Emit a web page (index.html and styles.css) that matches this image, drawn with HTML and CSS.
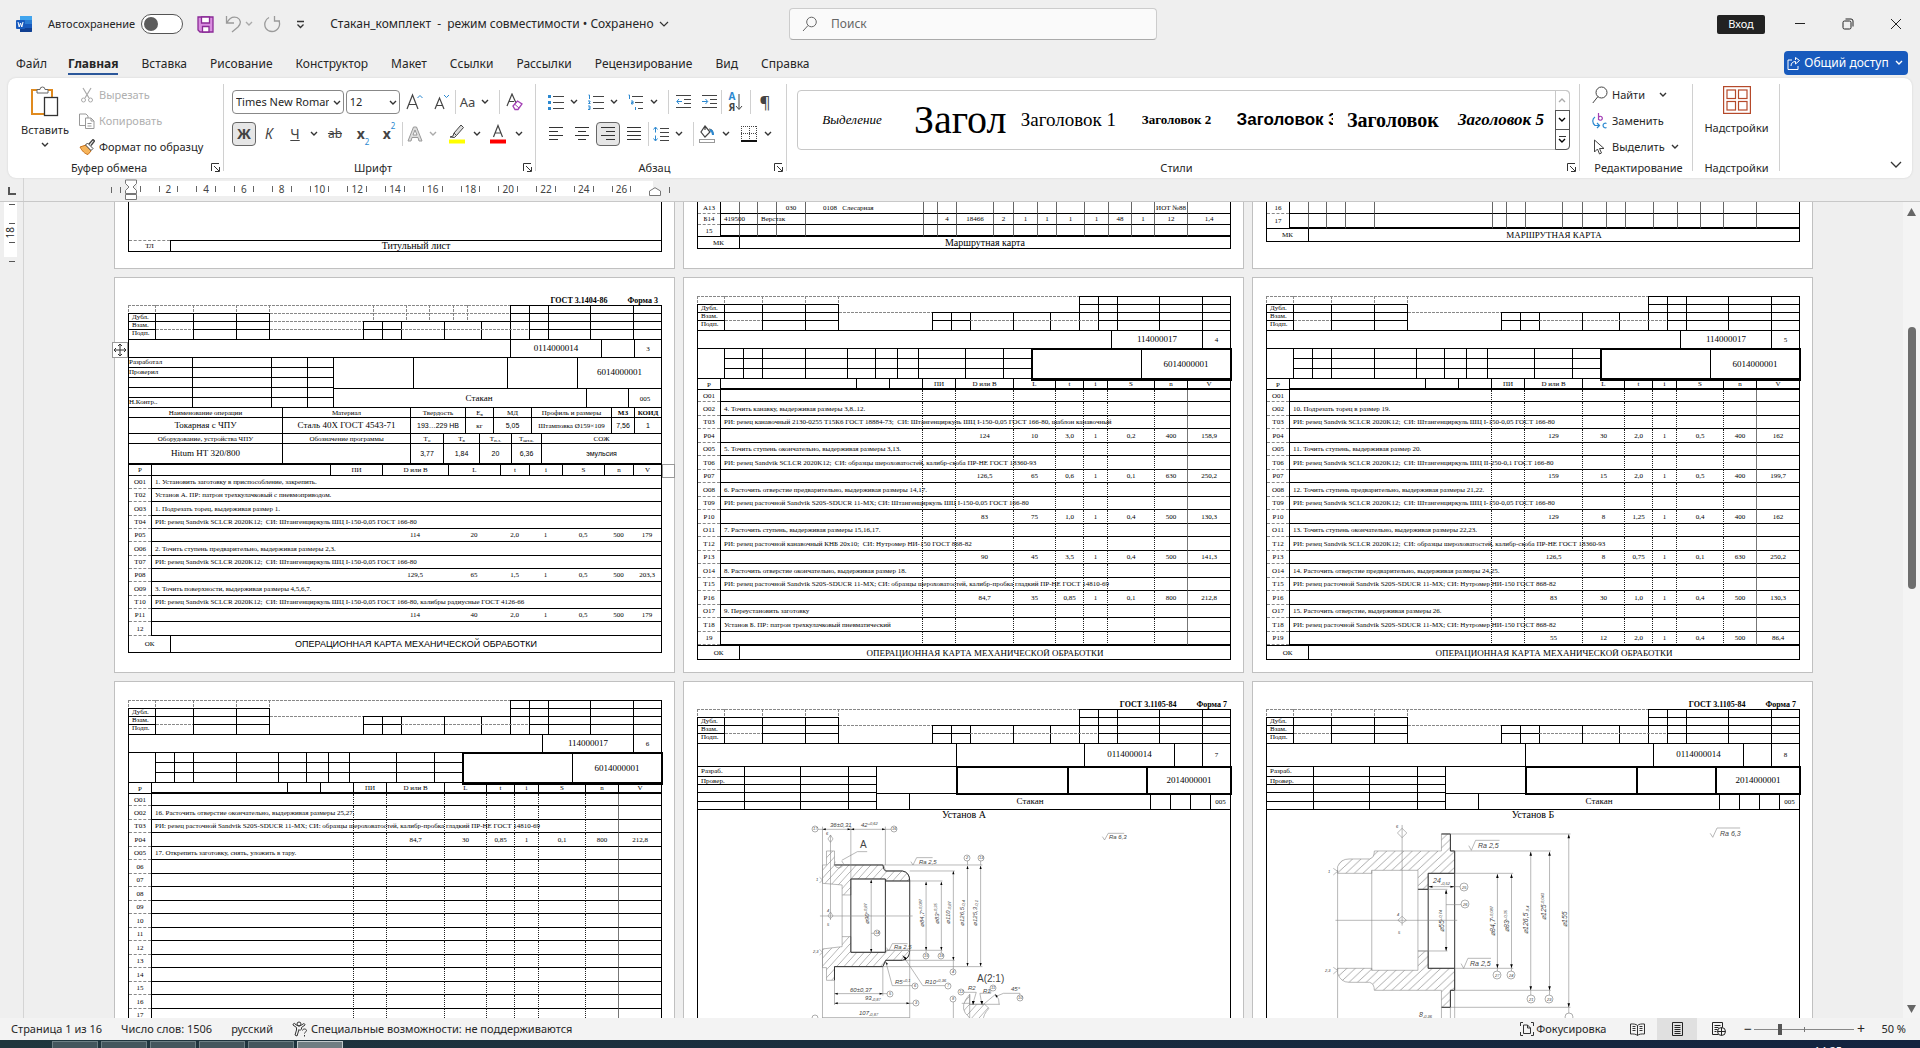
FILE: index.html
```html
<!DOCTYPE html>
<html lang="ru">
<head>
<meta charset="utf-8">
<title>Стакан_комплект</title>
<link rel="stylesheet" href="styles.css">
</head>
<body>
<svg class="defs" aria-hidden="true">
  <symbol id="caret" viewBox="0 0 8 6"><path d="M1 1l3 3 3-3" fill="none" stroke="currentColor" stroke-width="1.4"/></symbol>
  <symbol id="launch" viewBox="0 0 9 9"><path d="M.5 8V.5H8M3 3l5 5M8.500 4V8.500H4" fill="none" stroke="#333"/></symbol>
  <!-- upper stamp common to every form -->
  <symbol id="stamp" viewBox="0 0 534 35">
    <path class="ink" d="M0 8.500H142M0 16.500H142M0 24.500H28M65 24.500H142M0 34.500H534M.5 8V35M27.500 8V35M65.500 8V35M108.500 8V35M141.500 8V35M235 16.500H382M235 24.500H273M235.500 16V35M254.500 16V35M273.500 16V35M316.500 16V35M353.500 16V35M382 .5H534M382 8.500H534M382 16.500H534M401 24.500H534M382.500 0V35M401.500 0V35M420.500 0V35M462.500 0V35M505.500 0V35M533.500 0V35"/>
    <path class="dash" d="M0 .5H382M.5 0V8M27.500 0V8M65.500 0V8M108.500 0V8M141.500 0V8M28 24.500H65M142 16.500H235M273 24.500H401"/>
  </symbol>
  <symbol id="stamp-extra" viewBox="0 0 534 35">
    <path class="dash" d="M142 8.500H382M142 24.500H235M245.500 0V16M278.500 0V16M301.500 0V16M325.500 0V16M339.500 0V16"/>
  </symbol>
  <symbol id="changes" viewBox="0 0 334 30">
    <path class="ink" d="M27 9.500H334M27 19.500H334M26.500 0V30M45.500 0V30M64.500 0V30M107.500 0V30M149.500 0V30M177.500 0V30M199.500 0V30M220.500 0V30M267.500 0V30M305.500 0V30"/>
  </symbol>
  <pattern id="hatch" width="20" height="24" patternUnits="userSpaceOnUse"><path d="M-2 26.400L22 -2.400" stroke="#777" stroke-width="1.600"/></pattern>
</svg>

<header class="titlebar">
  <svg class="word" width="16" height="16" viewBox="0 0 16 16"><rect x="4" width="12" height="16" rx="1" fill="#2b7cd3"/><path d="M4 0h11a1 1 0 0 1 1 1v3H4z" fill="#41a5ee"/><path d="M4 12h12v3a1 1 0 0 1-1 1H4z" fill="#103f91"/><path d="M4 8h12v4H4z" fill="#185abd"/><rect y="4" width="9" height="9" rx="1" fill="#185abd"/><path d="M2 6l1.200 5L4.500 7l1.300 4L7 6" fill="none" stroke="#fff"/></svg>
  <label class="autosave">Автосохранение <input type="checkbox"></label>
  <button class="ib" aria-label="Сохранить"><svg width="17" height="17" viewBox="0 0 17 17"><path d="M1 1h15v15H3l-2-2z" fill="#d98ee0" stroke="#8a2a96" stroke-width="1.300"/><path d="M4.500 1h8v6h-8zM5.500 10.500h6.500V16H5.500z" fill="#fff" stroke="#8a2a96" stroke-width="1.300"/></svg></button>
  <button class="ib" aria-label="Отменить"><svg width="17" height="18" viewBox="0 0 17 18"><path d="M1.500 1v7H9M2 7.500C5 2 9 1.500 12 2.500c4 2 4.500 6 1 9.500L7 17" fill="none" stroke="#9a9a9a" stroke-width="1.300"/></svg></button>
  <svg class="cv pale"><use href="#caret"/></svg>
  <button class="ib" aria-label="Повторить"><svg width="18" height="18" viewBox="0 0 18 18"><path d="M11.500 1v5H17M16 6C18 11 14.500 16.500 9 16.500S1 12 2 7.500c.5-2 2-4 4-5" fill="none" stroke="#9a9a9a" stroke-width="1.300"/></svg></button>
  <button class="ib" aria-label="Настроить панель"><svg width="9" height="9" viewBox="0 0 9 9"><path d="M1 1.500h7M1.500 4.500l3 3 3-3" fill="none" stroke="#333" stroke-width="1.300"/></svg></button>
  <button class="doc-name">Стакан_комплект&nbsp; -&nbsp; режим совместимости • Сохранено <svg width="10" height="7" viewBox="0 0 10 7"><path d="M1 1l4 4 4-4" fill="none" stroke="#333" stroke-width="1.200"/></svg></button>
  <label class="search"><svg width="16" height="16" viewBox="0 0 16 16"><circle cx="9.500" cy="6" r="4.800" fill="none" stroke="#666"/><path d="M6 9.500L1 15" stroke="#666"/></svg><input type="text" placeholder="Поиск" aria-label="Поиск"></label>
  <div class="window-tools">
    <button class="signin">Вход</button>
    <button class="win" aria-label="Свернуть"><svg width="12" height="12" viewBox="0 0 12 12"><path d="M1 5.500h10" stroke="#222"/></svg></button>
    <button class="win" aria-label="Восстановить"><svg width="12" height="12" viewBox="0 0 12 12"><rect x="1" y="3" width="8" height="8" rx="1.500" fill="none" stroke="#222"/><path d="M3.500 1h5.500a2 2 0 0 1 2 2v5.500" fill="none" stroke="#222"/></svg></button>
    <button class="win" aria-label="Закрыть"><svg width="12" height="12" viewBox="0 0 12 12"><path d="M1 1l10 10M11 1L1 11" stroke="#222"/></svg></button>
  </div>
</header>

<nav class="tabs">
  <a href="#file">Файл</a><a href="#home" class="on">Главная</a><a href="#insert">Вставка</a><a href="#draw">Рисование</a><a href="#design">Конструктор</a><a href="#layout">Макет</a><a href="#refs">Ссылки</a><a href="#mail">Рассылки</a><a href="#review">Рецензирование</a><a href="#view">Вид</a><a href="#help">Справка</a>
  <button class="share"><svg width="13" height="13" viewBox="0 0 13 13"><path d="M5 3H1v9.500h10V9M4 9c0-3 2-4.500 4.500-4.500V7L12.500 3.500 8.500.5V3" fill="none" stroke="#fff"/></svg>Общий доступ<svg class="cv"><use href="#caret"/></svg></button>
</nav>

<section class="ribbon">
  <div class="group clip">
    <div class="body">
      <button class="big"><svg width="28" height="32" viewBox="0 0 28 32"><path d="M6 4H1v24h12M16 4h5v7" fill="none" stroke="#e08a1e" stroke-width="2"/><path d="M6 7V3.500h3a2.500 2.500 0 0 1 5 0h3V7z" fill="#fff" stroke="#666"/><rect x="13.500" y="11.500" width="13" height="18" fill="#fff" stroke="#333" stroke-width="1.300"/></svg>Вставить<svg class="cv"><use href="#caret"/></svg></button>
      <div class="stack">
        <button class="line off"><svg width="16" height="16" viewBox="0 0 16 16"><path d="M4 1l6 10M12 1L6 11" fill="none" stroke="#aaa" stroke-width="1.200"/><circle cx="4.500" cy="13" r="2" fill="none" stroke="#aaa"/><circle cx="11.500" cy="13" r="2" fill="none" stroke="#aaa"/></svg>Вырезать</button>
        <button class="line off"><svg width="16" height="16" viewBox="0 0 16 16"><path d="M6 12.500H.5V1H7l2 2v2M6.500 5H12l3 3v7.500H6.500zM12 5v3h3M8.500 10.500h4M8.500 13h4" fill="none" stroke="#999"/></svg>Копировать</button>
        <button class="line"><svg width="16" height="16" viewBox="0 0 16 16"><path d="M1 8l6-2 5 6-3 3.500C6 15 3 12 1 8z" fill="#f6b45a" stroke="#c8701a"/><path d="M6.500 6l2-2 5.500 5.500-2 2z" fill="#fff" stroke="#444"/><path d="M10 5l4-4.500 1.500 1.500L12 6.500" fill="none" stroke="#444" stroke-width="1.300"/></svg>Формат по образцу</button>
      </div>
    </div>
    <div class="foot">Буфер обмена<button aria-label="Параметры буфера"><svg><use href="#launch"/></svg></button></div>
  </div>

  <div class="group font">
    <div class="body rows">
      <div class="tools">
        <span class="combo name"><select aria-label="Шрифт"><option>Times New Roman</option></select><svg class="cv"><use href="#caret"/></svg></span>
        <span class="combo size"><select aria-label="Размер"><option>12</option></select><svg class="cv"><use href="#caret"/></svg></span>
        <button class="t w28" aria-label="Увеличить"><svg width="18" height="18" viewBox="0 0 18 18"><path d="M1 16L6.500 2 12 16M3 11.500h7" fill="none" stroke="#444" stroke-width="1.200"/><path d="M11.500 5L14 2.500 16.500 5" fill="none" stroke="#2b88d0"/></svg></button>
        <button class="t w26" aria-label="Уменьшить"><svg width="18" height="18" viewBox="0 0 18 18"><path d="M2 16L6.500 5 11 16M3.500 12.500h6" fill="none" stroke="#444" stroke-width="1.200"/><path d="M11 2l2.500 2.500L16 2" fill="none" stroke="#2b88d0"/></svg></button>
        <i class="bar"></i>
        <button class="t w24 big-aa">Aa</button><svg class="cv"><use href="#caret"/></svg>
        <i class="bar ml"></i>
        <button class="t w28" aria-label="Очистить формат"><svg width="17" height="18" viewBox="0 0 17 18"><path d="M1 13L6 1l4 9M3 8.500h5" fill="none" stroke="#444" stroke-width="1.200"/><path d="M7 13l4.500-5L16 11l-4 5.500H9z" fill="#fff" stroke="#a33fb5" stroke-width="1.300"/><path d="M8.500 11l4.500 4" stroke="#a33fb5"/></svg></button>
      </div>
      <div class="tools">
        <button class="t w24 on"><b>Ж</b></button>
        <button class="t w26"><em>К</em></button>
        <button class="t w26"><u>Ч</u></button><svg class="cv"><use href="#caret"/></svg>
        <button class="t w30"><s>ab</s></button>
        <button class="t w26 x"><b>x</b><sub>2</sub></button>
        <button class="t w26 x"><b>x</b><sup>2</sup></button>
        <i class="bar"></i>
        <button class="t w24" aria-label="Эффекты"><svg width="16" height="16" viewBox="0 0 16 16"><path d="M1 15L6.500 1h3L15 15h-3l-1-3.500H5L4 15zM6 9h4L8 4z" fill="#ddd" stroke="#999"/></svg></button><svg class="cv pale"><use href="#caret"/></svg>
        <button class="t w28 ml" aria-label="Цвет выделения"><svg width="16" height="20" viewBox="0 0 16 20"><path d="M1 13l3-1 1-3 7-8 2.500 2.500-7 8-2 2zM5 9l2.500 2.500" fill="#ddd" stroke="#444"/><path d="M0 15.500h16v4H0z" fill="#ff0"/></svg></button><svg class="cv"><use href="#caret"/></svg>
        <button class="t w30" aria-label="Цвет текста"><svg width="16" height="20" viewBox="0 0 16 20"><path d="M3.500 13L8 1.500 12.500 13M5 9h6" fill="none" stroke="#444" stroke-width="1.200"/><path d="M0 15.500h16v4H0z" fill="#f00"/></svg></button><svg class="cv"><use href="#caret"/></svg>
      </div>
    </div>
    <div class="foot">Шрифт<button aria-label="Параметры шрифта"><svg><use href="#launch"/></svg></button></div>
  </div>

  <div class="group para">
    <div class="body rows">
      <div class="tools">
        <button class="t w24" aria-label="Маркеры"><svg width="16" height="16" viewBox="0 0 16 16"><path d="M5 2.500h11M5 8.500h11M5 14.500h11" stroke="#444"/><path d="M0 1h3v3H0zM0 7h3v3H0zM0 13h3v3H0z" fill="#2b88d0"/></svg></button><svg class="cv"><use href="#caret"/></svg>
        <button class="t w24 ml" aria-label="Нумерация"><svg width="16" height="16" viewBox="0 0 16 16"><path d="M5 2.500h11M5 8.500h11M5 14.500h11" stroke="#444"/><path d="M.5 1h1v4M0 7h2v1L.5 9.500h2M0 12h2v2H.5M2 14v1.500H0" fill="none" stroke="#2b88d0"/></svg></button><svg class="cv"><use href="#caret"/></svg>
        <button class="t w24 ml" aria-label="Список"><svg width="16" height="16" viewBox="0 0 16 16"><path d="M4 2.500h11M7 8.500h8M10 14.500h5" stroke="#444"/><path d="M.5 1h1v4M3 7h2v3H3.500V8.500H5M7.500 13v3" fill="none" stroke="#2b88d0"/></svg></button><svg class="cv"><use href="#caret"/></svg>
        <i class="bar ml"></i>
        <button class="t w28" aria-label="Уменьшить отступ"><svg width="15" height="14" viewBox="0 0 15 14"><path d="M0 .5h15M8 4.500h7M8 8.500h7M0 12.500h15" stroke="#444"/><path d="M6 6.500H1M3 4L.8 6.500 3 9" fill="none" stroke="#2b88d0"/></svg></button>
        <button class="t w24" aria-label="Увеличить отступ"><svg width="15" height="14" viewBox="0 0 15 14"><path d="M0 .5h15M8 4.500h7M8 8.500h7M0 12.500h15" stroke="#444"/><path d="M0 6.500h5.500M3.500 4l2.200 2.500L3.500 9" fill="none" stroke="#2b88d0"/></svg></button>
        <i class="bar"></i>
        <button class="t w28 sort"><span><b>А</b><b>Я</b></span><svg width="8" height="18" viewBox="0 0 8 18"><path d="M4 1v15M1 13l3 3.500L7 13" fill="none" stroke="#444"/></svg></button>
        <i class="bar"></i>
        <button class="t w28 pil">¶</button>
      </div>
      <div class="tools">
        <button class="t w24" aria-label="По левому краю"><svg width="14" height="14" viewBox="0 0 14 14"><path d="M0 .5h14M0 4.500h9M0 8.500h14M0 12.500h9" stroke="#333"/></svg></button>
        <button class="t w28" aria-label="По центру"><svg width="14" height="14" viewBox="0 0 14 14"><path d="M0 .5h14M3 4.500h8M0 8.500h14M3 12.500h8" stroke="#333"/></svg></button>
        <button class="t w24 on" aria-label="По правому краю"><svg width="14" height="14" viewBox="0 0 14 14"><path d="M0 .5h14M5 4.500h9M0 8.500h14M5 12.500h9" stroke="#333"/></svg></button>
        <button class="t w28" aria-label="По ширине"><svg width="14" height="14" viewBox="0 0 14 14"><path d="M0 .5h14M0 4.500h14M0 8.500h14M0 12.500h14" stroke="#333"/></svg></button>
        <i class="bar"></i>
        <button class="t w24" aria-label="Интервал"><svg width="16" height="16" viewBox="0 0 16 16"><path d="M7 2.500h9M7 6.500h9M7 10.500h9M7 14.500h9" stroke="#444"/><path d="M2.500 1.500v5M.5 3.500l2-2.500 2 2.500M2.500 9.500v5M.5 12.500l2 2.500 2-2.500" fill="none" stroke="#2b88d0"/></svg></button><svg class="cv"><use href="#caret"/></svg>
        <i class="bar ml"></i>
        <button class="t w26" aria-label="Заливка"><svg width="16" height="18" viewBox="0 0 16 18"><path d="M6 1l5 6-5 5-4-5zM6 1V5M10 4c3 0 4 3 4 6" fill="none" stroke="#444" stroke-width="1.200"/><path d="M11 5c3 1 3 3 3 5" fill="none" stroke="#2b88d0" stroke-width="2"/><rect x=".5" y="14.500" width="15" height="3" fill="#fff" stroke="#999"/></svg></button><svg class="cv"><use href="#caret"/></svg>
        <button class="t w26 ml" aria-label="Границы"><svg width="16" height="16" viewBox="0 0 16 16"><path d="M.5 0V14M15.500 0V14M8.500 0V14M0 .5h16M0 7.500h16" stroke="#444" stroke-dasharray="1 1"/><path d="M0 15h16" stroke="#111" stroke-width="2"/></svg></button><svg class="cv"><use href="#caret"/></svg>
      </div>
    </div>
    <div class="foot">Абзац<button aria-label="Параметры абзаца"><svg><use href="#launch"/></svg></button></div>
  </div>

  <div class="group styles">
    <div class="body">
      <div class="gallery">
        <button class="s1">Выделение</button><button class="s2">Загол</button><button class="s3">Заголовок 1</button><button class="s4">Заголовок 2</button><button class="s5">Заголовок 3</button><button class="s6">Заголовок</button><button class="s7">Заголовок 5</button>
        <div class="gal-nav"><button class="dim" aria-label="Вверх"><svg class="up"><use href="#caret"/></svg></button><button aria-label="Вниз"><svg><use href="#caret"/></svg></button><button class="more" aria-label="Все стили"><svg><use href="#caret"/></svg></button></div>
      </div>
    </div>
    <div class="foot">Стили<button aria-label="Параметры стилей"><svg><use href="#launch"/></svg></button></div>
  </div>

  <div class="group edit">
    <div class="body stack">
      <button class="line"><svg width="16" height="18" viewBox="0 0 16 18"><circle cx="9.500" cy="6.500" r="5.500" fill="none" stroke="#444"/><path d="M6 10.500L.8 17" stroke="#444"/></svg>Найти<svg class="cv far"><use href="#caret"/></svg></button>
      <button class="line"><svg width="16" height="16" viewBox="0 0 16 16"><path d="M6.500 0v7M6.500 4.500a2 2 0 1 1 0 1.500" fill="none" stroke="#a33fb5" stroke-width="1.200"/><path d="M3 4C0 6 0 10 3 12.500h4M5 10l2.500 2.500L5 15M14.500 10.500a2.300 2.300 0 1 0 0 4" fill="none" stroke="#2b88d0" stroke-width="1.200"/></svg>Заменить</button>
      <button class="line"><svg width="16" height="16" viewBox="0 0 16 16"><path d="M2.500 1v12l3-3 2 5 2-1-2-4.500H12z" fill="#fff" stroke="#444"/></svg>Выделить<svg class="cv"><use href="#caret"/></svg></button>
    </div>
    <div class="foot plain-foot">Редактирование</div>
  </div>

  <div class="group addins">
    <div class="body"><button class="big"><svg width="28" height="28" viewBox="0 0 28 28" fill="none" stroke="#b5492a" stroke-width="1.200"><rect x=".6" y=".6" width="26.800" height="26.800"/><rect x="4" y="4" width="8.500" height="8.500"/><rect x="15.500" y="4" width="8.500" height="8.500"/><rect x="4" y="15.500" width="8.500" height="8.500"/><rect x="15.500" y="15.500" width="8.500" height="8.500"/></svg>Надстройки</button></div>
    <div class="foot plain-foot">Надстройки</div>
  </div>
  <button class="collapse" aria-label="Свернуть ленту"><svg width="12" height="8" viewBox="0 0 12 8"><path d="M1 1l5 5 5-5" fill="none" stroke="#333" stroke-width="1.300"/></svg></button>
</section>

<main class="work">
  <div class="ruler">
    <div class="corner"></div>
    <div class="scale-wrap">
      <div class="lead"></div>
      <svg class="indent" width="12" height="21" viewBox="0 0 12 21"><path d="M.5 1h11v3.500L8 8l3.500 3.500V14.500H.5v-3L4 8 .5 4.500zM.5 15.500h11v5H.5z" fill="#fff" stroke="#777"/></svg>
      <div class="scale"><i></i><span>2</span><span>4</span><span>6</span><span>8</span><span>10</span><span>12</span><span>14</span><span>16</span><span>18</span><span>20</span><span>22</span><span>24</span><span>26</span></div>
      <svg class="indent end" width="12" height="9" viewBox="0 0 12 9"><path d="M.5 8.500V4L6 .7 11.500 4v4.500z" fill="#fff" stroke="#777"/></svg>
      <div class="tail"></div>
    </div>
  </div>
  <div class="vruler"><div><span>18</span></div></div>
  <div class="canvas">

    <article class="sheet cut">
      <div class="frame blank"></div>
      <div class="frame foot-row title-foot"><span>ТЛ</span><strong>Титульный лист</strong></div>
    </article>

    <article class="sheet cut">
      <table class="route">
        <colgroup><col class="c22"><col class="c19"><col class="c18"><col class="c19"><col class="c29"><col class="c118"><col class="c14"><col class="c19"><col class="c37"><col class="c20"><col class="c24"><col class="c19"><col class="c28"><col class="c24"><col class="c23"><col class="c23"><col class="c33"><col class="c43"></colgroup>
        <tr><th>А13<td><td><td><td>030<td class="l">&emsp;&emsp;0108&ensp; Слесарная<td><td><td><td><td><td><td><td><td><td><td>ИОТ №88<td></tr>
        <tr><th>Б14<td class="l">419500<td><td class="l">Верстак<td><td><td><td>4<td>18466<td>2<td>1<td>1<td>1<td>1<td>48<td>1<td>12<td>1,4</tr>
        <tr class="last"><th>15<td><td><td><td><td><td><td><td><td><td><td><td><td><td><td><td><td></tr>
      </table>
      <div class="frame foot-row title-size"><span>МК</span><strong>Маршрутная карта</strong></div>
    </article>

    <article class="sheet cut">
      <table class="route third">
        <colgroup><col class="c22"><col class="c19"><col class="c18"><col class="c19"><col class="c29"><col class="c118"><col class="c14"><col class="c19"><col class="c37"><col class="c20"><col class="c24"><col class="c19"><col class="c28"><col class="c24"><col class="c23"><col class="c23"><col class="c33"><col class="c43"></colgroup>
        <tr><th>16<td><td><td><td><td><td><td><td><td><td><td><td><td><td><td><td><td></tr>
        <tr class="last"><th>17<td><td><td><td><td><td><td><td><td><td><td><td><td><td><td><td><td></tr>
      </table>
      <div class="frame foot-row tall"><span>МК</span><strong>МАРШРУТНАЯ КАРТА</strong></div>
    </article>

    <article class="sheet gost">
      <p class="form-no"><span>ГОСТ 3.1404-86</span><span>Форма 3</span></p>
      <div class="stamp"><svg><use href="#stamp"/></svg><svg><use href="#stamp-extra"/></svg><p>Дубл.</p><p>Взам.</p><p>Подп.</p></div>
      <div class="frame row num3"><div></div><div class="n">0114000014</div><div></div><div>3</div></div>
      <div class="frame row mid3">
        <div class="sign g3"><div>Разработал</div><div></div><div></div><div></div><div>Проверил</div><div></div><div></div><div></div><div></div><div></div><div></div><div></div><div></div><div></div><div></div><div></div><div>Н.Контр..</div><div></div><div></div><div></div></div>
        <div class="duo">
          <div class="row m3a"><div></div><div></div><div></div><div class="n">6014000001</div></div>
          <div class="row m3b"><div class="n part">Стакан</div><div></div><div>005</div></div>
        </div>
      </div>
      <div class="frame row spec h10"><div>Наименование операции</div><div>Материал</div><div>Твердость</div><div>Е<sub>в</sub></div><div>МД</div><div>Профиль и размеры</div><div><b>МЗ</b></div><div><b>КОИД</b></div></div>
      <div class="frame row spec h16"><div class="n">Токарная с ЧПУ</div><div class="n">Сталь 40Х ГОСТ 4543-71</div><div class="sans">193…229 НВ</div><div>кг</div><div class="sans">5,05</div><div>Штамповка Ø159×109</div><div class="sans">7,56</div><div class="sans">1</div></div>
      <div class="frame row time h10"><div>Оборудование, устройства ЧПУ</div><div>Обозначение программы</div><div>Т<sub>о</sub></div><div>Т<sub>в</sub></div><div>Т<sub>п.з.</sub></div><div>Т<sub>шт.к.</sub></div><div>СОЖ</div></div>
      <div class="frame row time h20"><div class="n">Hitum HT 320/800</div><div></div><div class="sans">3,77</div><div class="sans">1,84</div><div class="sans">20</div><div class="sans">6,36</div><div class="sans">эмульсия</div></div>
      <table class="ops first">
        <colgroup><col class="c22"><col class="c179"><col class="c52"><col class="c66"><col class="c52"><col class="c29"><col class="c33"><col class="c42"><col class="c29"><col class="c28"></colgroup>
        <thead><tr><th>Р<th><th>ПИ<th>D или В<th>L<th>t<th>i<th>S<th>n<th>V</tr></thead>
        <tbody>
        <tr><th>О01<td class="l" colspan="9">1. Установить заготовку в приспособление, закрепить.</tr>
        <tr><th>Т02<td class="l" colspan="9">Установ А. ПР: патрон трехкулачковый с пневмоприводом.</tr>
        <tr><th>О03<td class="l" colspan="9">1. Подрезать торец, выдерживая размер 1.</tr>
        <tr><th>Т04<td class="l" colspan="9">РИ: резец Sandvik SCLCR 2020K12;&nbsp; СИ: Штангенциркуль ШЦ I-150-0,05 ГОСТ 166-80</tr>
        <tr><th>Р05<td><td><td>114<td>20<td>2,0<td>1<td>0,5<td>500<td>179</tr>
        <tr><th>О06<td class="l" colspan="9">2. Точить ступень предварительно, выдерживая размеры 2,3.</tr>
        <tr><th>Т07<td class="l" colspan="9">РИ: резец Sandvik SCLCR 2020K12;&nbsp; СИ: Штангенциркуль ШЦ I-150-0,05 ГОСТ 166-80</tr>
        <tr><th>Р08<td><td><td>129,5<td>65<td>1,5<td>1<td>0,5<td>500<td>203,3</tr>
        <tr><th>О09<td class="l" colspan="9">3. Точить поверхности, выдерживая размеры 4,5,6,7.</tr>
        <tr><th>Т10<td class="l" colspan="9">РИ: резец Sandvik SCLCR 2020K12;&nbsp; СИ: Штангенциркуль ШЦ I-150-0,05 ГОСТ 166-80, калибры радиусные ГОСТ 4126-66</tr>
        <tr><th>Р11<td><td><td>114<td>40<td>2,0<td>1<td>0,5<td>500<td>179</tr>
        <tr><th>12<td colspan="9"></tr>
        </tbody>
      </table>
      <div class="frame foot-row sansfoot"><span>ОК</span><strong>ОПЕРАЦИОННАЯ КАРТА МЕХАНИЧЕСКОЙ ОБРАБОТКИ</strong></div>
      <svg class="grip" width="16" height="16" viewBox="0 0 16 16"><rect x=".5" y=".5" width="15" height="15" fill="#fff" stroke="#999"/><path d="M8 2v12M2 8h12M6 4l2-2 2 2M6 12l2 2 2-2M4 6L2 8l2 2M12 6l2 2-2 2" fill="none" stroke="#333"/></svg>
      <i class="resize"></i>
    </article>

    <article class="sheet plain">
      <div class="stamp"><svg><use href="#stamp"/></svg><p>Дубл.</p><p>Взам.</p><p>Подп.</p></div>
      <div class="frame row num2"><div></div><div class="n">114000017</div><div>4</div></div>
      <div class="frame row mid2"><svg width="334" height="30"><use href="#changes"/></svg><div class="heavy"><div></div><div class="n">6014000001</div></div></div>
      <table class="ops cont">
        <colgroup><col class="c22"><col class="c136"><col class="c33"><col class="c33"><col class="c33"><col class="c58"><col class="c42"><col class="c28"><col class="c24"><col class="c47"><col class="c33"><col class="c43"></colgroup>
        <thead><tr><th>Р<th><th><th><th>ПИ<th>D или В<th>L<th>t<th>i<th>S<th>n<th>V</tr></thead>
        <tbody>
        <tr><th>О01<td colspan="3"><td><td><td><td><td><td><td><td></tr>
        <tr><th>О02<td colspan="3">4. Точить канавку, выдерживая размеры 3,8..12.<td><td><td><td><td><td><td><td></tr>
        <tr><th>Т03<td colspan="3">РИ: резец канавочный 2130-0255 Т15К6 ГОСТ 18884-73;&nbsp; СИ: Штангенциркуль ШЦ I-150-0,05 ГОСТ 166-80, шаблон канавочный<td><td><td><td><td><td><td><td></tr>
        <tr><th>Р04<td colspan="3"><td><td>124<td>10<td>3,0<td>1<td>0,2<td>400<td>158,9</tr>
        <tr><th>О05<td colspan="3">5. Точить ступень окончательно, выдерживая размеры 3,13.<td><td><td><td><td><td><td><td></tr>
        <tr><th>Т06<td colspan="3">РИ: резец Sandvik SCLCR 2020K12;&nbsp; СИ: образцы шероховатостей, калибр-скоба ПР-НЕ ГОСТ 18360-93<td><td><td><td><td><td><td><td></tr>
        <tr><th>Р07<td colspan="3"><td><td>126,5<td>65<td>0,6<td>1<td>0,1<td>630<td>250,2</tr>
        <tr><th>О08<td colspan="3">6. Расточить отверстие предварительно, выдерживая размеры 14,17.<td><td><td><td><td><td><td><td></tr>
        <tr><th>Т09<td colspan="3">РИ: резец расточной Sandvik S20S-SDUCR 11-MX; СИ: Штангенциркуль ШЦ I-150-0,05 ГОСТ 166-80<td><td><td><td><td><td><td><td></tr>
        <tr><th>Р10<td colspan="3"><td><td>83<td>75<td>1,0<td>1<td>0,4<td>500<td>130,3</tr>
        <tr><th>О11<td colspan="3">7. Расточить ступень, выдерживая размеры 15,16,17.<td><td><td><td><td><td><td><td></tr>
        <tr><th>Т12<td colspan="3">РИ: резец расточной канавочный КНБ 20х10;&nbsp; СИ: Нутромер НИ-150 ГОСТ 868-82<td><td><td><td><td><td><td><td></tr>
        <tr><th>Р13<td colspan="3"><td><td>90<td>45<td>3,5<td>1<td>0,4<td>500<td>141,3</tr>
        <tr><th>О14<td colspan="3">8. Расточить отверстие окончательно, выдерживая размер 18.<td><td><td><td><td><td><td><td></tr>
        <tr><th>Т15<td colspan="3">РИ: резец расточной Sandvik S20S-SDUCR 11-MX; СИ: образцы шероховатостей, калибр-пробка гладкий ПР-НЕ ГОСТ 14810-69<td><td><td><td><td><td><td><td></tr>
        <tr><th>Р16<td colspan="3"><td><td>84,7<td>35<td>0,85<td>1<td>0,1<td>800<td>212,8</tr>
        <tr><th>О17<td colspan="3">9. Переустановить заготовку<td><td><td><td><td><td><td><td></tr>
        <tr><th>Т18<td colspan="3">Установ Б. ПР: патрон трехкулачковый пневматический<td><td><td><td><td><td><td><td></tr>
        <tr><th>19<td colspan="3"><td><td><td><td><td><td><td><td></tr>
        </tbody>
      </table>
      <div class="frame foot-row heavy-top"><span>ОК</span><strong>ОПЕРАЦИОННАЯ КАРТА МЕХАНИЧЕСКОЙ ОБРАБОТКИ</strong></div>
    </article>

    <article class="sheet plain">
      <div class="stamp"><svg><use href="#stamp"/></svg><p>Дубл.</p><p>Взам.</p><p>Подп.</p></div>
      <div class="frame row num2"><div></div><div class="n">114000017</div><div>5</div></div>
      <div class="frame row mid2"><svg width="334" height="30"><use href="#changes"/></svg><div class="heavy"><div></div><div class="n">6014000001</div></div></div>
      <table class="ops cont">
        <colgroup><col class="c22"><col class="c136"><col class="c33"><col class="c33"><col class="c33"><col class="c58"><col class="c42"><col class="c28"><col class="c24"><col class="c47"><col class="c33"><col class="c43"></colgroup>
        <thead><tr><th>Р<th><th><th><th>ПИ<th>D или В<th>L<th>t<th>i<th>S<th>n<th>V</tr></thead>
        <tbody>
        <tr><th>О01<td colspan="3"><td><td><td><td><td><td><td><td></tr>
        <tr><th>О02<td colspan="3">10. Подрезать торец в размер 19.<td><td><td><td><td><td><td><td></tr>
        <tr><th>Т03<td colspan="3">РИ: резец Sandvik SCLCR 2020K12;&nbsp; СИ: Штангенциркуль ШЦ I-150-0,05 ГОСТ 166-80<td><td><td><td><td><td><td><td></tr>
        <tr><th>Р04<td colspan="3"><td><td>129<td>30<td>2,0<td>1<td>0,5<td>400<td>162</tr>
        <tr><th>О05<td colspan="3">11. Точить ступень, выдерживая размер 20.<td><td><td><td><td><td><td><td></tr>
        <tr><th>Т06<td colspan="3">РИ: резец Sandvik SCLCR 2020K12;&nbsp; СИ: Штангенциркуль ШЦ II-250-0,1 ГОСТ 166-80<td><td><td><td><td><td><td><td></tr>
        <tr><th>Р07<td colspan="3"><td><td>159<td>15<td>2,0<td>1<td>0,5<td>400<td>199,7</tr>
        <tr><th>О08<td colspan="3">12. Точить ступень предварительно, выдерживая размеры 21,22.<td><td><td><td><td><td><td><td></tr>
        <tr><th>Т09<td colspan="3">РИ: резец Sandvik SCLCR 2020K12;&nbsp; СИ: Штангенциркуль ШЦ I-150-0,05 ГОСТ 166-80<td><td><td><td><td><td><td><td></tr>
        <tr><th>Р10<td colspan="3"><td><td>129<td>8<td>1,25<td>1<td>0,4<td>400<td>162</tr>
        <tr><th>О11<td colspan="3">13. Точить ступень окончательно, выдерживая размеры 22,23.<td><td><td><td><td><td><td><td></tr>
        <tr><th>Т12<td colspan="3">РИ: резец Sandvik SCLCR 2020K12;&nbsp; СИ: образцы шероховатостей, калибр-скоба ПР-НЕ ГОСТ 18360-93<td><td><td><td><td><td><td><td></tr>
        <tr><th>Р13<td colspan="3"><td><td>126,5<td>8<td>0,75<td>1<td>0,1<td>630<td>250,2</tr>
        <tr><th>О14<td colspan="3">14. Расточить отверстие предварительно, выдерживая размеры 24,25.<td><td><td><td><td><td><td><td></tr>
        <tr><th>Т15<td colspan="3">РИ: резец расточной Sandvik S20S-SDUCR 11-MX; СИ: Нутромер НИ-150 ГОСТ 868-82<td><td><td><td><td><td><td><td></tr>
        <tr><th>Р16<td colspan="3"><td><td>83<td>30<td>1,0<td>1<td>0,4<td>500<td>130,3</tr>
        <tr><th>О17<td colspan="3">15. Расточить отверстие, выдерживая размеры 26.<td><td><td><td><td><td><td><td></tr>
        <tr><th>Т18<td colspan="3">РИ: резец расточной Sandvik S20S-SDUCR 11-MX; СИ: Нутромер НИ-150 ГОСТ 868-82<td><td><td><td><td><td><td><td></tr>
        <tr><th>Р19<td colspan="3"><td><td>55<td>12<td>2,0<td>1<td>0,4<td>500<td>86,4</tr>
        </tbody>
      </table>
      <div class="frame foot-row heavy-top"><span>ОК</span><strong>ОПЕРАЦИОННАЯ КАРТА МЕХАНИЧЕСКОЙ ОБРАБОТКИ</strong></div>
    </article>

    <article class="sheet plain">
      <div class="stamp"><svg><use href="#stamp"/></svg><p>Дубл.</p><p>Взам.</p><p>Подп.</p></div>
      <div class="frame row num2"><div></div><div class="n">114000017</div><div>6</div></div>
      <div class="frame row mid2"><svg width="334" height="30"><use href="#changes"/></svg><div class="heavy"><div></div><div class="n">6014000001</div></div></div>
      <table class="ops cont">
        <colgroup><col class="c22"><col class="c136"><col class="c33"><col class="c33"><col class="c33"><col class="c58"><col class="c42"><col class="c28"><col class="c24"><col class="c47"><col class="c33"><col class="c43"></colgroup>
        <thead><tr><th>Р<th><th><th><th>ПИ<th>D или В<th>L<th>t<th>i<th>S<th>n<th>V</tr></thead>
        <tbody>
        <tr><th>О01<td colspan="3"><td><td><td><td><td><td><td><td></tr>
        <tr><th>О02<td colspan="3">16. Расточить отверстие окончательно, выдерживая размеры 25,27.<td><td><td><td><td><td><td><td></tr>
        <tr><th>Т03<td colspan="3">РИ: резец расточной Sandvik S20S-SDUCR 11-MX; СИ: образцы шероховатостей, калибр-пробка гладкий ПР-НЕ ГОСТ 14810-69<td><td><td><td><td><td><td><td></tr>
        <tr><th>Р04<td colspan="3"><td><td>84,7<td>30<td>0,85<td>1<td>0,1<td>800<td>212,8</tr>
        <tr><th>О05<td colspan="3">17. Открепить заготовку, снять, уложить в тару.<td><td><td><td><td><td><td><td></tr>
        <tr><th>06<td colspan="3"><td><td><td><td><td><td><td><td></tr>
        <tr><th>07<td colspan="3"><td><td><td><td><td><td><td><td></tr>
        <tr><th>08<td colspan="3"><td><td><td><td><td><td><td><td></tr>
        <tr><th>09<td colspan="3"><td><td><td><td><td><td><td><td></tr>
        <tr><th>10<td colspan="3"><td><td><td><td><td><td><td><td></tr>
        <tr><th>11<td colspan="3"><td><td><td><td><td><td><td><td></tr>
        <tr><th>12<td colspan="3"><td><td><td><td><td><td><td><td></tr>
        <tr><th>13<td colspan="3"><td><td><td><td><td><td><td><td></tr>
        <tr><th>14<td colspan="3"><td><td><td><td><td><td><td><td></tr>
        <tr><th>15<td colspan="3"><td><td><td><td><td><td><td><td></tr>
        <tr><th>16<td colspan="3"><td><td><td><td><td><td><td><td></tr>
        <tr><th>17<td colspan="3"><td><td><td><td><td><td><td><td></tr>
        </tbody>
      </table>
    </article>

    <article class="sheet gost">
      <p class="form-no"><span>ГОСТ 3.1105-84</span><span>Форма 7</span></p>
      <div class="stamp"><svg><use href="#stamp"/></svg><p>Дубл.</p><p>Взам.</p><p>Подп.</p></div>
      <div class="frame row num7"><div></div><div></div><div class="n">0114000014</div><div></div><div>7</div></div>
      <div class="frame row mid7">
        <div class="sign g7"><div>Разраб.</div><div></div><div></div><div></div><div>Провер.</div><div></div><div></div><div></div><div></div><div></div><div></div><div></div><div></div><div></div><div></div><div></div><div></div><div></div><div></div><div></div></div>
        <div class="duo">
          <div class="row m7a"><div></div><div class="heavy h7"><div></div><div></div><div class="n">2014000001</div></div></div>
          <div class="row m7b"><div></div><div class="n">Стакан</div><div></div><div></div><div></div><div>005</div></div>
        </div>
      </div>
      <div class="frame sketch">
        <p>Установ А</p>
        <svg width="532" height="198" viewBox="698 820 532 198">
          <g class="draw" transform="translate(680 675) scale(.3635 .3333)">
            <path class="hat" d="M392 570H403V528H425V570H560L566 588H612Q632 592 632 618H565V612H470V660H446V630L392 625zM392 822L446 815V785H470V832H565V826H632Q632 852 612 856H566L558 875H425V916H403V878H392z"/>
            <path class="dk" d="M425 570H558Q560 588 566 588H612Q632 592 632 618V826Q632 852 612 856H566L558 875H425V916M470 612H565V832H470zM565 618H632"/>
            <path class="th" d="M392 455V1119M470 455V612M565 455V570M632 826V1119M425 916V990M558 875V962M446 660V785M414 480V735M385 723H640M560 570H832M558 875H832M632 588H756M612 856H756M632 618H722M565 826H722M370 463H582M427 560a12 12 0 1 0 18 -2M445 556L488 530H515M566 860L584 932H640M612 840L668 932H730M558 956H572M632 985H642M526 775H536M677 826V838M719 826V838M752 856V886M791 558V570M827 558V570M407 492l7-12 7 12-7 10zM407 723l7-12 7 12-7 8zM384 607L392 615 384 624M384 823L392 832 384 840M635 560l6 10 10-22H695M568 818l6 10 10-22H626M1162 485l6 10 10-20H1222"/>
            <path class="th" d="M526 614V832M677 620V826M719 620V826M752 588V856M791 572V874M827 572V874M425 956H558M425 985H632M392 1028H632"/>
            <path d="M523 624l3-10 3 10zM523 822l3 10 3-10zM674 630l3-10 3 10zM674 816l3 10 3-10zM716 630l3-10 3 10zM716 816l3 10 3-10zM749 598l3-10 3 10zM749 846l3 10 3-10zM788 582l3-10 3 10zM788 864l3 10 3-10zM824 582l3-10 3 10zM824 864l3 10 3-10zM392 463l9-3v6zM470 463l-9-3v6zM470 463l9-3v6zM565 463l-9-3v6zM425 956l9-3v6zM558 956l-9-3v6zM425 985l9-3v6zM632 985l-9-3v6zM565 860l4 10 3-4zM612 842l9 14 2-8z"/>
            <path class="hat" d="M797 958Q770 990 785 1015Q800 1030 797 1035H835Q833 1020 850 1000L838 988H797z"/>
            <path class="th" d="M752 975V1119M775 985H797M797 958V1035M797 988H880M833 990L868 958M868 958Q880 972 878 988M770 952H815L806 985M855 945V955H825L830 985M868 965L890 955H935V962"/>
            <path d="M803 978l8 0-5 12zM826 978l8 0-3 12zM866 958l5 10 3-5z"/>
          </g>
          <g class="bub"><circle cx="815" cy="829" r="3"/><circle cx="894" cy="829" r="3"/><circle cx="967" cy="858" r="3"/><circle cx="981" cy="858" r="3"/><circle cx="877" cy="933" r="3"/><circle cx="926" cy="956" r="3"/><circle cx="941" cy="956" r="3"/><circle cx="953" cy="972" r="3"/><circle cx="915" cy="986" r="3"/><circle cx="948" cy="986" r="3"/><circle cx="890" cy="994" r="3"/><circle cx="916" cy="1003" r="3"/><circle cx="961" cy="992" r="3"/><circle cx="993" cy="988" r="3"/><circle cx="1020" cy="998" r="3"/><circle cx="953" cy="999" r="3"/><circle cx="815" cy="1018" r="3"/></g>
          <g class="dim-t"><text x="830" y="827">36±0,31</text><text x="861" y="827">42<tspan dy="-2" class="sm">+0,62</tspan></text><text x="919" y="864">Ra 2,5</text><text x="894" y="949">Ra 2,5</text><text x="1109" y="839">Ra 6,3</text><text x="895" y="984">R5<tspan dy="-2" class="sm">+0,1</tspan></text><text x="925" y="984">R10<tspan dy="-2" class="sm">+0,36</tspan></text><text x="850" y="992">60±0,37</text><text x="865" y="1000">93<tspan dy="1" class="sm">-0,87</tspan></text><text x="859" y="1015">107<tspan dy="1" class="sm">-0,87</tspan></text><text x="968" y="990">R2</text><text x="983" y="993">R1</text><text x="1011" y="991">45°</text>
          <text transform="translate(869 924) rotate(-90)">⌀90<tspan dy="-2" class="sm">+0,87</tspan></text><text transform="translate(924 927) rotate(-90)">⌀84,7<tspan dy="-2" class="sm">+0,087</tspan></text><text transform="translate(939 924) rotate(-90)">⌀83<tspan dy="-2" class="sm">+0,35</tspan></text><text transform="translate(950 924) rotate(-90)">⌀110<tspan dy="1" class="sm">-0,87</tspan></text><text transform="translate(964 926) rotate(-90)">⌀126,5<tspan dy="1" class="sm">-0,4</tspan></text><text transform="translate(977 926) rotate(-90)">⌀125,3<tspan dy="1" class="sm">-0,1</tspan></text>
          <text class="lab" x="860" y="848">А</text><text class="lab" x="977" y="982">А(2:1)</text><text class="sm" x="826" y="835">6</text><text class="sm" x="816" y="881">1</text><text class="sm" x="813" y="953">2,3</text><text class="sm" x="827" y="912">4</text><text class="sm" x="827" y="926">5</text>
          <text class="sm" x="813" y="830">17</text><text class="sm" x="892" y="830">16</text><text class="sm" x="966" y="859">2</text><text class="sm" x="979" y="859">13</text><text class="sm" x="875" y="934">14</text><text class="sm" x="924" y="957">15</text><text class="sm" x="939" y="957">18</text><text class="sm" x="952" y="973">4</text><text class="sm" x="914" y="987">6</text><text class="sm" x="947" y="987">7</text><text class="sm" x="889" y="995">5</text><text class="sm" x="915" y="1004">3</text><text class="sm" x="959" y="993">12</text><text class="sm" x="991" y="989">11</text><text class="sm" x="1018" y="999">10</text><text class="sm" x="952" y="1000">8</text></g>
        </svg>
      </div>
    </article>

    <article class="sheet gost">
      <p class="form-no"><span>ГОСТ 3.1105-84</span><span>Форма 7</span></p>
      <div class="stamp"><svg><use href="#stamp"/></svg><p>Дубл.</p><p>Взам.</p><p>Подп.</p></div>
      <div class="frame row num7"><div></div><div></div><div class="n">0114000014</div><div></div><div>8</div></div>
      <div class="frame row mid7">
        <div class="sign g7"><div>Разраб.</div><div></div><div></div><div></div><div>Провер.</div><div></div><div></div><div></div><div></div><div></div><div></div><div></div><div></div><div></div><div></div><div></div><div></div><div></div><div></div><div></div></div>
        <div class="duo">
          <div class="row m7a"><div></div><div class="heavy h7"><div></div><div></div><div class="n">2014000001</div></div></div>
          <div class="row m7b"><div></div><div class="n">Стакан</div><div></div><div></div><div></div><div>005</div></div>
        </div>
      </div>
      <div class="frame sketch">
        <p>Установ Б</p>
        <svg width="532" height="198" viewBox="1267 820 532 198">
          <g class="draw" transform="translate(1250 675) scale(.4273 .3333)">
            <path class="hat" d="M205 595V575Q212 552 232 552H280Q291 548 291 528H448V477H469V528H479V595H417V643H393V586H285V595zM205 880V895Q212 922 232 922H280Q291 926 291 946H448V997H469V946H479V880H417V828H393V886H285V880z"/>
            <path class="dk" d="M448 477H469V528H479V946H469V997H448M417 595H479M417 880H479M417 595V880M393 643H417"/>
            <path class="th" d="M205 585V1119M285 586V886M393 643V828M448 997V1119M469 997V1119M479 946V1119M356 450V752M200 736H485M469 477H750M469 997H750M479 528H704M479 946H704M479 595H616M479 880H616M417 643H462M393 828H462M459 645V828M459 689H494M417 635H494M579 597V888M612 597V888M657 530V960M701 530V960M746 478V1016M512 512l6 14 10-30H584M494 866l6 14 10-30H564M1077 475l6 12 10-28H1147M345 474l11-14 11 14-11 14zM346 736l10-12 10 12-10 9zM195 580L205 589 195 600M195 877L205 886 195 897"/>
            <path d="M417 635l10-3v6zM479 635l-10-3v6zM456 656l3-12 3 12zM456 816l3 12 3-12zM576 609l3-12 3 12zM576 868l3 12 3-12zM609 609l3-12 3 12zM609 868l3 12 3-12zM654 542l3-12 3 12zM654 934l3 12 3-12zM698 542l3-12 3 12zM698 934l3 12 3-12zM743 490l3-12 3 12zM743 985l3 12 3-12z"/>
          </g>
          <g class="bub"><circle cx="1464" cy="887" r="4"/><circle cx="1465" cy="904" r="4"/><circle cx="1497" cy="975" r="4"/><circle cx="1511" cy="975" r="4"/><circle cx="1531" cy="999" r="4"/><circle cx="1549" cy="999" r="4"/><circle cx="1569" cy="1017" r="4"/></g>
          <g class="dim-t b2"><text x="1478" y="848">Ra 2,5</text><text x="1470" y="966">Ra 2,5</text><text x="1720" y="836">Ra 6,3</text><text x="1433" y="883">24<tspan dy="2" class="sm">-0,52</tspan></text><text x="1419" y="1017">8<tspan dy="1" class="sm">-0,36</tspan></text>
          <text transform="translate(1444 932) rotate(-90)">⌀55<tspan dy="-2" class="sm">+0,74</tspan></text><text transform="translate(1495 936) rotate(-90)">⌀84,7<tspan dy="-2" class="sm">+0,087</tspan></text><text transform="translate(1509 932) rotate(-90)">⌀83<tspan dy="-2" class="sm">+0,35</tspan></text><text transform="translate(1528 934) rotate(-90)">⌀126,5<tspan dy="1" class="sm">-0,4</tspan></text><text transform="translate(1546 920) rotate(-90)">⌀125<tspan dy="-2" class="sm">-0,043</tspan></text><text transform="translate(1567 927) rotate(-90)">⌀155</text>
          <text class="sm" x="1396" y="828">6</text><text class="sm" x="1328" y="873">1</text><text class="sm" x="1325" y="972">2,3</text><text class="sm" x="1397" y="916">4</text><text class="sm" x="1398" y="934">5</text><text class="sm" x="1462" y="889">25</text><text class="sm" x="1463" y="906">26</text><text class="sm" x="1495" y="977">27</text><text class="sm" x="1509" y="977">24</text><text class="sm" x="1529" y="1001">21</text><text class="sm" x="1547" y="1001">23</text></g>
        </svg>
      </div>
    </article>
  </div>
  <div class="scroll"><svg width="9" height="8" viewBox="0 0 9 8"><path d="M0 8L4.500 0 9 8z" fill="#666"/></svg><i></i><svg width="9" height="8" viewBox="0 0 9 8"><path d="M0 0h9L4.500 8z" fill="#666"/></svg></div>
</main>

<footer class="status">
  <button>Страница 1 из 16</button><button>Число слов: 1506</button><button>русский</button>
  <button class="acc"><svg width="16" height="16" viewBox="0 0 16 16" fill="none" stroke="#333"><circle cx="7" cy="3" r="2"/><path d="M1 4c0-2 2-2 2-1 3 2.500 5 2.500 8 0 1-1 2 0 2 1L9.500 6.500V8L8 9.500 7 8.500 5 15l-2-1L4.500 9V6.500zM10.500 9.500c0-2 4-2 4 0 0 1.500-2 1.500-2 3M12.500 14v1.500"/></svg>Специальные возможности: не поддерживаются</button>
  <div class="views">
    <button class="focus"><svg width="14" height="14" viewBox="0 0 14 14" fill="none" stroke="#333"><path d="M3 .5H.5V4M.5 10v3.500H3M11 13.500h2.500V10M11 .5h2.500V4M3.500 3h4l3 3v5.500h-7zM7.500 3v3h3"/></svg>Фокусировка</button>
    <button class="v" aria-label="Чтение"><svg width="15" height="13" viewBox="0 0 15 13" fill="none" stroke="#333"><path d="M7.500 2.500C6 1 3 .8.500 1v10c3-.2 5.500 0 7 1.500 1.500-1.500 4-1.700 7-1.500V1c-3-.2-5.500 0-7 1.500zM7.500 2.500v10M2.500 3.500h3M2.500 5.500h3M2.500 7.500h3M9.500 3.500h3M9.500 5.500h3M9.500 7.500h3"/></svg></button>
    <button class="v on" aria-label="Разметка"><svg width="11" height="14" viewBox="0 0 11 14" fill="none" stroke="#222"><path d="M.5.5h10v13H.5zM2.500 3.500h6M2.500 5.500h6M2.500 7.500h6M2.500 9.500h6M2.500 11.500h6"/></svg></button>
    <button class="v" aria-label="Веб"><svg width="14" height="14" viewBox="0 0 14 14" fill="none" stroke="#222"><path d="M6 12.500H.5V.5h10v5M2.500 3.500h6M2.500 5.500h4M2.500 7.500h3M2.500 9.500h2"/><circle cx="9.500" cy="9.500" r="4"/><path d="M5.500 9.500h8M9.500 5.500v8"/></svg></button>
    <button class="z">−</button><input type="range" min="0" max="100" value="25" aria-label="Масштаб"><button class="z">+</button><span class="pct">50 %</span>
  </div>
</footer>
<div class="taskbar"><i></i><i></i><i></i><i></i><i></i><i class="act"></i><time>14:25</time></div>
</body>
</html>
```

FILE: styles.css
```css
* { box-sizing: border-box; }
body { margin: 0; height: 100vh; display: flex; flex-direction: column; overflow: hidden; background: #efefef; color: #262626; font: 12px/16px "Noto Sans", "Open Sans", sans-serif; }
button { font: inherit; color: inherit; background: none; border: 0; padding: 0; margin: 0; display: inline-flex; align-items: center; justify-content: center; white-space: nowrap; }
svg { display: block; flex: none; }
.defs { position: absolute; width: 0; height: 0; }
.cv { width: 12px; height: 6px; color: #333; }
.pale { color: #aaa; }
.ink { fill: none; stroke: #000; shape-rendering: crispEdges; }
.dash { fill: none; stroke: #888; stroke-dasharray: 3 1; shape-rendering: crispEdges; }

/* title bar */
.titlebar { height: 48px; padding: 0 12px 0 16px; display: flex; align-items: center; flex: none; position: relative; }
.autosave { display: flex; align-items: center; gap: 6px; margin: 0 8px 0 16px; white-space: nowrap; font-size: 11px; }
.autosave input { appearance: none; margin: 0; width: 42px; height: 20px; border: 1px solid #555; border-radius: 10px; background: #fff; display: flex; align-items: center; padding: 2px; }
.autosave input::before { content: ""; width: 14px; height: 14px; border-radius: 7px; background: #5c5c5c; }
.ib { width: 28px; height: 28px; }
.titlebar .cv { margin: 0 3px 0 -4px; }
.doc-name { margin-left: 16px; gap: 5px; }
.search { position: absolute; left: 789px; top: 8px; width: 368px; height: 32px; background: #fafafa; border: 1px solid #ccc; border-bottom-color: #aaa; border-radius: 4px; display: flex; align-items: center; padding-left: 12px; gap: 13px; }
.search input { border: 0; background: none; font: inherit; outline: 0; flex: 1; padding: 0; }
.search input::placeholder { color: #666; opacity: 1; }
.window-tools { margin-left: auto; display: flex; align-items: center; }
.signin { background: #222; color: #fff; width: 48px; height: 19px; border-radius: 2px; margin-right: 11px; font-size: 11px; }
.win { width: 48px; height: 32px; }
.win:last-child { margin-right: -12px; }

/* tabs */
.tabs { height: 30px; flex: none; padding: 0 12px 0 16px; display: flex; gap: 23px; align-items: stretch; }
.tabs a { color: inherit; text-decoration: none; padding-top: 8px; height: 28px; }
.tabs .on { font-weight: 700; border-bottom: 2px solid #2b579a; height: 27px; margin-left: -2px; }
.share { margin-left: auto; margin-top: 3px; width: 124px; height: 24px; background: #185abd; color: #fff; border-radius: 4px; gap: 4px; }
.share .cv { color: #fff; }

/* ribbon */
.ribbon { margin: 0 8px; height: 100px; flex: none; background: #fff; border-radius: 8px; display: flex; box-shadow: 0 0 2px #ccc; font-size: 11px; }
.group { display: flex; flex-direction: column; position: relative; flex: none; padding: 6px 8px 0; }
.group::after { content: ""; position: absolute; right: 0; top: 6px; bottom: 7px; width: 1px; background: #d0d0d0; }
.clip { width: 216px; } .font { width: 312px; } .para { width: 251px; } .styles { flex: 1; min-width: 0; } .edit { width: 113px; padding-left: 12px; } .addins { width: 87px; }
.collapse { margin: 82px 10px 0 0; height: 10px; width: 122px; justify-content: flex-end; }
.body { flex: 1; display: flex; min-height: 0; }
.foot { height: 20px; flex: none; display: flex; align-items: center; justify-content: center; position: relative; padding: 0 14px 1px 0; }
.plain-foot { padding-right: 0; }
.foot button { position: absolute; right: -4px; top: 5px; }
.foot button svg { width: 9px; height: 9px; }
.big { flex-direction: column; justify-content: flex-start; width: 58px; padding-top: 2px; gap: 4px; }
.addins .big { width: 71px; gap: 6px; }
.stack { display: flex; flex-direction: column; gap: 4px; }
.clip .stack { padding-left: 5px; }
.line { height: 22px; flex: none; gap: 4px; justify-content: flex-start; }
.off { color: #b0b0b0; }
.far { margin-left: 8px; }
.rows { flex-direction: column; gap: 8px; padding-top: 6px; }
.tools { display: flex; height: 24px; align-items: center; }
.combo { position: relative; height: 24px; display: block; }
.combo select { appearance: none; width: 100%; height: 24px; border: 1px solid #888; border-radius: 4px; background: #fff; font: inherit; color: inherit; padding: 0 14px 0 3px; }
.combo .cv { position: absolute; right: 1px; top: 10px; }
.name { width: 113px; margin-right: 2px; } .size { width: 55px; margin-right: 1px; }
.t { height: 24px; font-size: 14px; color: #444; }
.t.on { border: 1px solid #666; border-radius: 4px; background: #e6e6e6; }
.w24 { width: 24px; } .w26 { width: 26px; } .w28 { width: 28px; } .w30 { width: 30px; }
.ml { margin-left: 4px; }
.bar { width: 1px; height: 24px; background: #d0d0d0; }
.bar.ml { margin-left: 8px; }
.big-aa { font-size: 13px; }
.t s { font-size: 12px; }
.x sub, .x sup { font-size: 8px; line-height: 8px; color: #2b88d0; }
.x sub { align-self: flex-end; } .x sup { align-self: flex-start; }
.sort span { display: flex; flex-direction: column; font-size: 10px; line-height: 11px; }
.sort b:first-child { color: #2b88d0; }
.pil { font-size: 17px; }
.gallery { flex: 1; height: 60px; margin: 6px 2px 0; border: 1px solid #c8c8c8; border-radius: 4px; display: flex; color: #000; font-family: "Liberation Serif", serif; min-width: 0; }
.gallery > button { flex: 1; min-width: 0; overflow: hidden; justify-content: center; margin: 0 6px; }
.s1 { font-size: 13px; font-style: italic; }
.gallery .s2 { font-size: 40px; line-height: 48px; }
.s3 { font-size: 19px; line-height: 24px; } .s4 { font-size: 13px; font-weight: 700; }
.gallery .s5 { font: 700 17px/24px "Liberation Sans", sans-serif; justify-content: flex-start; }
.s6 { font-size: 20px; line-height: 24px; font-weight: 700; } .s7 { font-size: 17px; line-height: 24px; font-weight: 700; font-style: italic; }
.gal-nav { width: 15px; margin: -1px -1px -1px 0; display: flex; flex-direction: column; }
.gal-nav button { flex: 1; border: 1px solid #555; margin-bottom: -1px; }
.gal-nav button:last-child { margin: 0; border-radius: 0 0 4px 0; }
.gal-nav .dim { border-color: #c8c8c8; border-radius: 0 4px 0 0; color: #aaa; }
.gal-nav svg { width: 8px; height: 6px; }
.gal-nav .up { rotate: 180deg; }
.gal-nav .more { flex-direction: column; gap: 1px; }
.gal-nav .more::before { content: ""; width: 7px; height: 1px; background: #333; }

/* work area */
.work { flex: 1; min-height: 0; display: grid; grid-template: 24px 1fr / 24px 1fr 17px; }
.ruler { grid-column: 1 / -1; display: flex; border-bottom: 1px solid #c8c8c8; }
.corner { width: 24px; border-right: 1px solid #d4d4d4; }
.corner::before { content: ""; display: block; width: 6px; height: 6px; margin: 9px 0 0 8px; border: solid #555; border-width: 0 0 2px 2px; }
.scale-wrap { display: flex; flex: 1; margin-right: 17px; justify-content: center; padding-right: 1138px; min-width: 0; }
.lead, .tail { width: 10px; height: 6px; margin-top: 9px; border-left: 1px solid #666; flex: none; }
.lead { border-right: 1px solid #666; margin-right: 4px; }
.indent { margin-top: 1px; position: relative; z-index: 1; }
.indent.end { margin: 9px 0 0 -4px; }
.tail { margin-left: 8px; }
.scale { width: 516px; flex: none; display: flex; background: #fff; height: 15px; margin: 3px 0 0; padding: 0 12px 0 0; font-size: 10px; line-height: 14px; color: #444; }
.scale > i { width: 13px; border-right: 1px solid #666; height: 6px; margin-top: 5px; margin-right: 9px; margin-left: -9px; }
.scale span { flex: 1; display: flex; justify-content: space-between; align-items: center; padding: 0 9px; }
.scale span::before, .scale span::after { content: ""; width: 1px; height: 6px; background: #666; }
.vruler { border-right: 1px solid #d4d4d4; }
.vruler div { width: 13px; height: 55px; margin-left: 4px; background: linear-gradient(#555, #555) 5px 2px / 6px 1px no-repeat, linear-gradient(#555, #555) 5px 21px / 6px 1px no-repeat, linear-gradient(#555, #555) 5px 40px / 6px 1px no-repeat, #fff; display: flex; align-items: center; justify-content: center; font-size: 10px; padding-top: 6px; }
.vruler span { writing-mode: vertical-rl; rotate: 180deg; line-height: 13px; }
.vruler::after { content: ""; display: block; width: 6px; height: 1px; margin: 4px 0 0 9px; background: #555; }
.canvas { overflow: hidden; display: grid; grid-template-columns: repeat(3, 561px); grid-template-rows: 67px 396px 396px; gap: 8px; justify-content: center; align-content: start; }
.scroll { background: #f4f4f4; display: flex; flex-direction: column; align-items: center; padding: 6px 0 5px; }
.scroll i { width: 8px; height: 262px; border-radius: 4px; background: #6e6e6e; margin: 111px 0 auto; }

/* sheets */
.sheet { background: #fff; border: 1px solid #c0c0c0; padding: 18px 12px 0 13px; position: relative; color: #000; font: 7px/8px "Liberation Serif", serif; min-width: 0; }
.sheet p { margin: 0; }
.sheet.cut { padding-top: 0; border-top: 0; }
.sheet.gost { padding-top: 17px; }
.form-no { height: 10px; display: flex; justify-content: flex-end; gap: 20px; font: 700 8px/12px "Liberation Serif", serif; padding-right: 4px; }
.stamp { height: 34px; position: relative; padding: 8px 0 0 4px; }
.stamp svg { position: absolute; left: 0; top: 0; width: 534px; height: 35px; }
.frame { width: 534px; border-left: 1px solid #000; border-right: 1px solid #000; }
.row { display: grid; border-top: 1px solid #000; }
.row > div { display: flex; align-items: center; justify-content: center; border-left: 1px solid #000; white-space: nowrap; min-width: 0; }
.row > div:first-child { border-left: 0; }
.row sub { font-size: 5px; line-height: 5px; align-self: flex-end; }
.n, .frame .n { font-size: 9px; line-height: 10px; padding-bottom: 2px; }
.sans { font-family: "Liberation Sans", sans-serif; }
.num3 { height: 18px; grid-template-columns: 381px 91px 33px 1fr; }
.num2 { height: 18px; grid-template-columns: 413px 91px 1fr; }
.num7 { height: 23px; grid-template-columns: 258px 128px 90px 28px 1fr; }
.mid2 { height: 30px; grid-template-columns: 333px 1fr; }
.row > .heavy { border: 2px solid #000; margin: -1px -2px -2px 0; display: grid; grid-template-columns: 108px 1fr; align-items: stretch; position: relative; }
.heavy > div { display: flex; align-items: center; justify-content: center; }
.heavy > div + div { border-left: 1px solid #000; }
.row > .h7 { grid-template-columns: 109px 79px 1fr; }
.h7 > div + div { border-left-width: 2px; }
.mid3 { height: 50px; grid-template-columns: 204px 1fr; }
.mid7 { height: 43px; grid-template-columns: 178px 1fr; }
.row > .sign { display: grid; align-items: stretch; justify-content: stretch; }
.row > .duo { display: grid; align-items: stretch; justify-content: stretch; border-left: 1px solid #000; }
.g3 { grid-template: repeat(5, 10px) / 63px 79px 36px 1fr; }
.g7 { grid-template: 10px 8px 8px 9px 8px / 46px 56px 48px 1fr; }
.sign > div { border-bottom: 1px solid #000; border-left: 1px solid #000; }
.sign > div:nth-child(4n+1) { border-left: 0; }
.sign > div:nth-last-child(-n+4) { border-bottom: 0; }
.g7 > div { padding-left: 3px; }
.mid3 .duo { grid-template-rows: 30px 20px; }
.mid7 .duo { grid-template-rows: 26px 17px; }
.duo .row:first-child { border-top: 0; }
.m3a { grid-template-columns: 79px 94px 70px 1fr; }
.m3b { grid-template-columns: 252px 42px 1fr; }
.m3b .part { padding-left: 38px; }
.m7a { grid-template-columns: 79px 1fr; }
.m7b { grid-template-columns: 32px 241px 20px 20px 20px 1fr; }
.spec { grid-template-columns: 153px 128px 55px 28px 38px 80px 23px 1fr; }
.time { grid-template-columns: 153px 128px 33px 36px 32px 30px 1fr; }
.h10 { height: 10px; } .h16 { height: 16px; } .h20 { height: 20px; }

table { border-collapse: separate; border-spacing: 0; table-layout: fixed; width: 534px; border-left: 1px solid #000; border-right: 1px solid #000; }
td, th { padding: 0; font-weight: 400; white-space: nowrap; text-align: center; line-height: 8px; }
tbody th { border-bottom: 1px dashed #888; }
tbody td { border-bottom: 1px solid #000; border-left: 1px solid #000; }
.c14 { width: 14px; } .c18 { width: 18px; } .c19 { width: 19px; } .c20 { width: 20px; } .c22 { width: 22px; } .c23 { width: 23px; } .c24 { width: 24px; } .c28 { width: 28px; } .c29 { width: 29px; } .c33 { width: 33px; } .c37 { width: 37px; } .c42 { width: 42px; } .c43 { width: 43px; } .c47 { width: 47px; } .c52 { width: 52px; } .c58 { width: 58px; } .c66 { width: 66px; } .c118 { width: 118px; } .c136 { width: 136px; } .c179 { width: 179px; }
.ops thead th { border-left: 1px solid #000; border-bottom: 1px solid #000; border-top: 1px solid #000; }
.ops thead th:first-child { border-left: 0; }
.ops .l, .route .l, .cont td:nth-child(2) { text-align: left; padding-left: 3px; }
.ops tbody tr { height: 13px; }
.first { border-top: 1px solid #000; }
.first thead tr { height: 12px; }
.first tbody tr:nth-child(3n) { height: 14px; }
.first tbody td:nth-child(n+3) { border-left: 0; }
.cont thead tr { height: 12px; }
.cont thead th { vertical-align: bottom; line-height: 7px; }
.cont thead th:nth-child(n+2) { border-bottom-width: 2px; }
.cont tbody tr:nth-child(2n) { height: 14px; }
.cont tbody tr:first-child { height: 12px; }
.cont td:nth-child(n+3) { border-left: 1px dotted #222; }
.cont td:last-child { border-left: 1px solid #777; }
.route tr { height: 11px; }
.route tr:first-child { height: 12px; }
.route .last { height: 12px; }
.route .last td { border-bottom-width: 2px; }
.route .last th { border-bottom-style: solid; border-color: #000; }
.route td:nth-child(n+3) { border-left-color: #666; }
.third .last { height: 15px; }
.foot-row { display: grid; grid-template-columns: 41px 1fr; height: 17px; border-bottom: 1px solid #000; }
.foot-row span, .foot-row strong { display: flex; align-items: center; justify-content: center; font-weight: 400; }
.foot-row strong { font-size: 9px; border-left: 1px solid #000; }
.title-foot strong, .title-size strong { font-size: 10px; }
.cut .foot-row { height: 12px; }
.cut .tall { height: 13px; }
.blank { height: 38px; }
.title-foot span { border-top: 1px dashed #888; }
.title-foot strong { border-top: 1px solid #000; }
.heavy-top { height: 15px; border-top: 1px solid #000; }
.sansfoot strong { font-family: "Liberation Sans", sans-serif; }
.grip { position: absolute; left: -3px; top: 64px; }
.resize { position: absolute; right: -1px; top: 186px; width: 13px; height: 14px; border: 1px solid #999; background: #fff; }

/* sketches */
.sketch { border-top: 1px solid #000; height: 210px; overflow: hidden; }
.sketch p { text-align: center; font-size: 10px; line-height: 10px; }
.draw path { vector-effect: non-scaling-stroke; }
.hat { fill: url(#hatch); stroke: #888; stroke-width: .6; }
.dk { fill: none; stroke: #333; stroke-width: 1; }
.th { fill: none; stroke: #888; stroke-width: .6; }
.bub { fill: #fff; stroke: #777; stroke-width: .6; }
.dim-t { font: italic 6px "Liberation Sans", sans-serif; fill: #444; }
.b2 { font-size: 7px; }
.dim-t .sm { font-size: 4px; }
.dim-t .lab { font-size: 10px; font-style: normal; }

/* status bar and taskbar */
.status { height: 22px; flex: none; background: #f3f3f3; display: flex; align-items: center; padding-left: 11px; gap: 19px; font-size: 11px; }
.acc { gap: 3px; }
.views { margin-left: auto; display: flex; align-items: center; padding-right: 14px; height: 22px; }
.focus { gap: 2px; margin-right: 11px; }
.v { width: 40px; height: 22px; }
.v.on { background: #e0e0e0; }
.z { width: 13px; height: 16px; font-size: 14px; }
.views input { appearance: none; width: 100px; height: 14px; margin: 0; background: linear-gradient(#777, #777) 50% 50% / 1px 5px no-repeat, linear-gradient(#888, #888) 0 50% / 100% 1px no-repeat; }
.views input::-webkit-slider-thumb { appearance: none; width: 4px; height: 11px; background: #555; }
.views .v:nth-child(4) { width: 43px; margin-right: 1px; }
.pct { margin-left: 14px; }
.taskbar { height: 8px; flex: none; background: linear-gradient(90deg, #1f363d, #13233f); display: flex; gap: 3px; padding-left: 52px; overflow: hidden; }
.taskbar i { width: 46px; height: 12px; margin-top: 1px; border: 1px solid #6d8085; background: #43565d; }
.taskbar .act { background: #6f7d82; border-color: #c0c8ca; }
.taskbar time { margin: 5px 78px 0 auto; color: #fff; font-size: 11px; line-height: 12px; }
```
